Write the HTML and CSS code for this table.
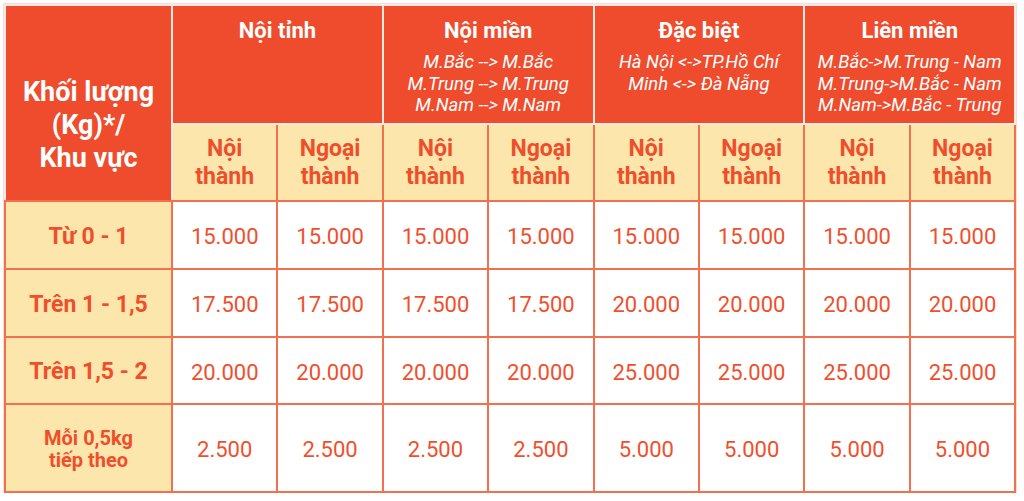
FILE: index.html
```html
<!DOCTYPE html>
<html lang="vi">
<head>
<meta charset="utf-8">
<title>Bảng giá</title>
<link rel="stylesheet" href="styles.css">
</head>
<body>
<table class="price">
  <colgroup>
    <col class="c-first">
    <col class="c"><col class="c"><col class="c"><col class="c">
    <col class="c"><col class="c"><col class="c"><col class="c">
  </colgroup>
  <thead>
    <tr class="r-top">
      <th class="hd hd-first" rowspan="2">Khối lượng<br>(Kg)*/<br>Khu vực</th>
      <th class="hd" colspan="2"><div class="ttl">Nội tỉnh</div></th>
      <th class="hd" colspan="2"><div class="ttl">Nội miền</div><div class="sub">M.Bắc --&gt; M.Bắc<br>M.Trung --&gt; M.Trung<br>M.Nam --&gt; M.Nam</div></th>
      <th class="hd" colspan="2"><div class="ttl">Đặc biệt</div><div class="sub">Hà Nội &lt;-&gt;TP.Hồ Chí<br>Minh &lt;-&gt; Đà Nẵng</div></th>
      <th class="hd" colspan="2"><div class="ttl">Liên miền</div><div class="sub">M.Bắc-&gt;M.Trung - Nam<br>M.Trung-&gt;M.Bắc - Nam<br>M.Nam-&gt;M.Bắc - Trung</div></th>
    </tr>
    <tr class="r-sub">
      <th class="sh">Nội<br>thành</th><th class="sh">Ngoại<br>thành</th>
      <th class="sh">Nội<br>thành</th><th class="sh">Ngoại<br>thành</th>
      <th class="sh">Nội<br>thành</th><th class="sh">Ngoại<br>thành</th>
      <th class="sh">Nội<br>thành</th><th class="sh">Ngoại<br>thành</th>
    </tr>
  </thead>
  <tbody>
    <tr class="r1">
      <th class="lbl">Từ 0 - 1</th>
      <td>15.000</td><td>15.000</td><td>15.000</td><td>15.000</td><td>15.000</td><td>15.000</td><td>15.000</td><td>15.000</td>
    </tr>
    <tr class="r2">
      <th class="lbl">Trên 1 - 1,5</th>
      <td>17.500</td><td>17.500</td><td>17.500</td><td>17.500</td><td>20.000</td><td>20.000</td><td>20.000</td><td>20.000</td>
    </tr>
    <tr class="r3">
      <th class="lbl">Trên 1,5 - 2</th>
      <td>20.000</td><td>20.000</td><td>20.000</td><td>20.000</td><td>25.000</td><td>25.000</td><td>25.000</td><td>25.000</td>
    </tr>
    <tr class="r4">
      <th class="lbl lbl-small">Mỗi 0,5kg<br>tiếp theo</th>
      <td>2.500</td><td>2.500</td><td>2.500</td><td>2.500</td><td>5.000</td><td>5.000</td><td>5.000</td><td>5.000</td>
    </tr>
  </tbody>
</table>
</body>
</html>
```
FILE: styles.css
```css
html, body {
  margin: 0;
  padding: 0;
  background: #ffffff;
}
body {
  font-family: Roboto, "Liberation Sans", Arial, sans-serif;
  padding: 4px 0 0 4px;
}
.price {
  border-collapse: collapse;
  table-layout: fixed;
  width: 1010px;
  box-shadow: 0 0 0 1px #fbdcd3;
}
.c-first { width: 167px; }
.c { width: 105.4px; }

.price th, .price td {
  padding: 0;
  text-align: center;
  border: 2px solid #f3704f;
}

/* top header */
.price .hd {
  background: #ee4c2c;
  color: #ffffff;
  border: 2px solid #fde9e2;
  vertical-align: top;
  padding-top: 12px;
}
.r-top { height: 119px; }
.ttl {
  font-size: 22px;
  font-weight: 700;
  line-height: 26px;
  margin-bottom: 8px;
}
.sub {
  font-size: 18.5px;
  font-style: italic;
  font-weight: 400;
  line-height: 21.5px;
}
.price .hd-first {
  font-size: 27px;
  font-weight: 700;
  line-height: 33px;
  vertical-align: top;
  padding-top: 70px;
  border-bottom: 2px solid #f3704f;
}

/* sub header */
.r-sub { height: 77px; }
.price .sh {
  background: #fde6ab;
  color: #ef4e2c;
  font-size: 23px;
  font-weight: 700;
  line-height: 27.6px;
  vertical-align: middle;
}
.r-sub .sh { border-top: 2px solid #fde9e2; }

/* body */
.r1 { height: 68px; }
.r2 { height: 68px; }
.r3 { height: 67px; }
.r4 { height: 88px; }
.price .lbl {
  background: #fde6ab;
  color: #ef4e2c;
  font-size: 23px;
  font-weight: 700;
  line-height: 26px;
  padding-top: 3px;
}
.price .lbl-small {
  font-size: 20px;
  line-height: 21.5px;
}
.price td {
  color: #f04f2d;
  font-size: 22px;
  font-weight: 400;
  vertical-align: middle;
  background: #ffffff;
  padding-top: 3px;
}
```
